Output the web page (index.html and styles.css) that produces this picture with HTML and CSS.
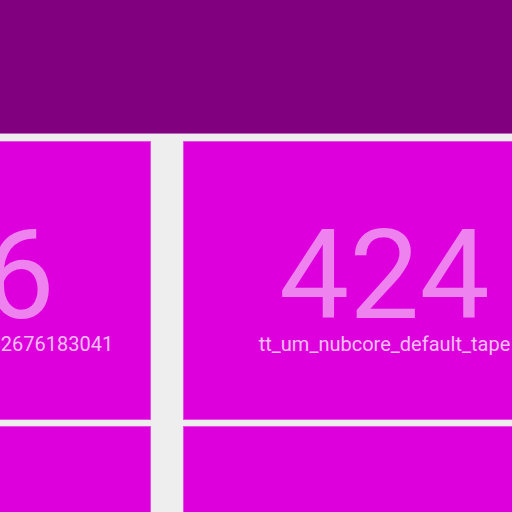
FILE: index.html
```html
<!DOCTYPE html>
<html>
<head>
<meta charset="utf-8">
<link rel="stylesheet" href="styles.css">
</head>
<body>
<header class="topbar"></header>
<main class="grid">
  <div class="tile">
    <div class="count">116</div>
    <div class="label">tt_um_wokwi_530226762676183041</div>
  </div>
  <div class="tile">
    <div class="count">424</div>
    <div class="label">tt_um_nubcore_default_tape</div>
  </div>
  <div class="tile"></div>
  <div class="tile"></div>
</main>
</body>
</html>
```
FILE: styles.css
```css
html, body {
  margin: 0;
  padding: 0;
  width: 512px;
  height: 512px;
  overflow: hidden;
  background: #eeeeee;
  font-family: Roboto, "Liberation Sans", sans-serif;
}
.topbar {
  height: 133px;
  background: #800080;
  border-bottom: 1px solid #b46ab4;
}
.grid {
  display: grid;
  grid-template-columns: 403px 403px;
  column-gap: 32px;
  row-gap: 6px;
  padding-top: 7px;
  margin-left: -252px;
  width: 838px;
}
.tile {
  box-sizing: border-box;
  height: 279px;
  background: #dd00dd;
  border: 1px solid #e54de5;
  display: flex;
  flex-direction: column;
  align-items: center;
  justify-content: center;
  padding-top: 13px;
}
.count {
  font-size: 125px;
  line-height: 113px;
  color: #ee82ee;
  white-space: nowrap;
}
.label {
  font-size: 20px;
  line-height: 24px;
  color: rgba(255, 255, 255, 0.75);
  white-space: nowrap;
}
```
